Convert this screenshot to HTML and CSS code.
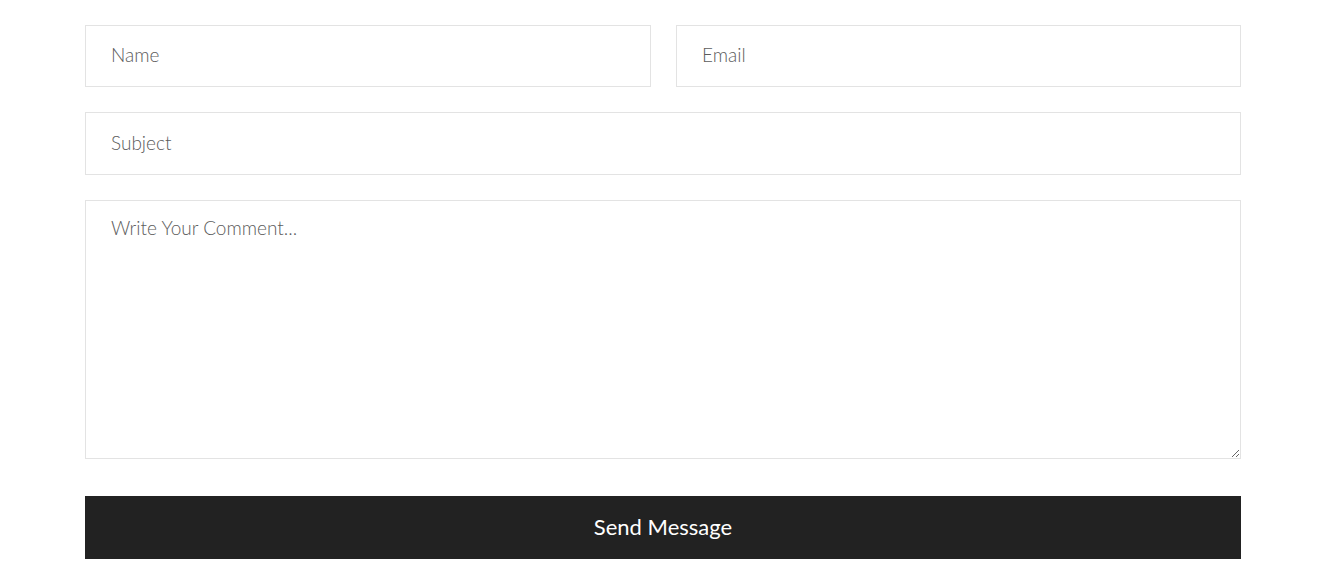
FILE: index.html
```html
<!DOCTYPE html>
<html lang="en">
<head>
<meta charset="utf-8">
<title>Contact Form</title>
<link rel="stylesheet" href="styles.css">
</head>
<body>
<form class="contact-form">
  <div class="row-two">
    <input class="field" type="text" placeholder="Name">
    <input class="field" type="email" placeholder="Email">
  </div>
  <input class="field field-wide" type="text" placeholder="Subject">
  <textarea class="field message" placeholder="Write Your Comment..."></textarea>
  <button class="send-btn" type="button">Send Message</button>
</form>
</body>
</html>
```
FILE: styles.css
```css
html, body {
  margin: 0;
  padding: 0;
  background: #ffffff;
}

body {
  font-family: "Lato", "Open Sans", sans-serif;
}

.contact-form {
  width: 1156px;
  margin: 25px 0 0 85px;
  display: grid;
  gap: 25px;
}

.row-two {
  display: grid;
  grid-template-columns: 566px 565px;
  gap: 25px;
}

.field {
  display: block;
  box-sizing: border-box;
  width: 100%;
  height: 62px;
  margin: 0;
  padding: 0 25px 3px;
  border: 1px solid #e3e3e3;
  border-radius: 0;
  background: #ffffff;
  font-family: "Lato", "Open Sans", sans-serif;
  font-weight: 300;
  font-size: 19px;
  color: #444444;
  outline: none;
}

.field-wide {
  height: 63px;
}

.field::placeholder {
  color: #5c5c5c;
  opacity: 1;
}

.message {
  height: 259px;
  padding: 14px 25px;
  resize: vertical;
  line-height: 26px;
}

.send-btn {
  display: block;
  width: 100%;
  height: 63px;
  margin-top: 12px;
  padding: 0 0 2px;
  border: none;
  border-radius: 0;
  background: #222222;
  color: #ffffff;
  font-family: "Lato", "Open Sans", sans-serif;
  font-weight: 400;
  font-size: 22px;
  cursor: pointer;
}
```
